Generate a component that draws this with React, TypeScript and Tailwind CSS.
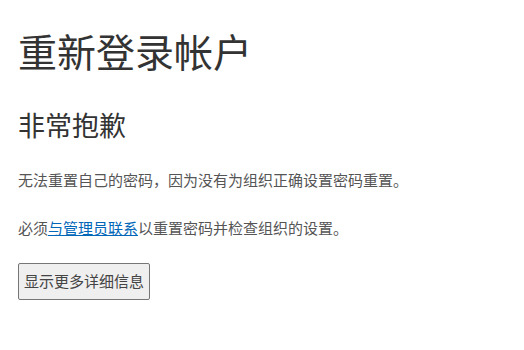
export default function App() {
  return (
    <div
      className="min-h-[350px] bg-white pl-[18px] text-[#333]"
      style={{ fontFamily: '"Segoe UI", "Noto Sans CJK SC", "Noto Sans", sans-serif' }}
    >
      <h1 className="pt-[27px] text-[39px] font-normal leading-[46px]">重新登录帐户</h1>
      <h2 className="mt-[35px] text-[27px] font-normal leading-[34px]">非常抱歉</h2>
      <p className="mt-[28px] text-[15px] leading-[20px] text-[#555]">
        无法重置自己的密码，因为没有为组织正确设置密码重置。
      </p>
      <p className="mt-[28px] text-[15px] leading-[20px] text-[#555]">
        必须
        <a href="#" className="text-[#0067b8] underline">
          与管理员联系
        </a>
        以重置密码并检查组织的设置。
      </p>
      <button
        type="button"
        className="mt-[25px] h-[37px] rounded-[2px] border border-[#767676] bg-[#efefef] px-[5px] text-[15px] text-[#444]"
      >
        显示更多详细信息
      </button>
    </div>
  );
}
